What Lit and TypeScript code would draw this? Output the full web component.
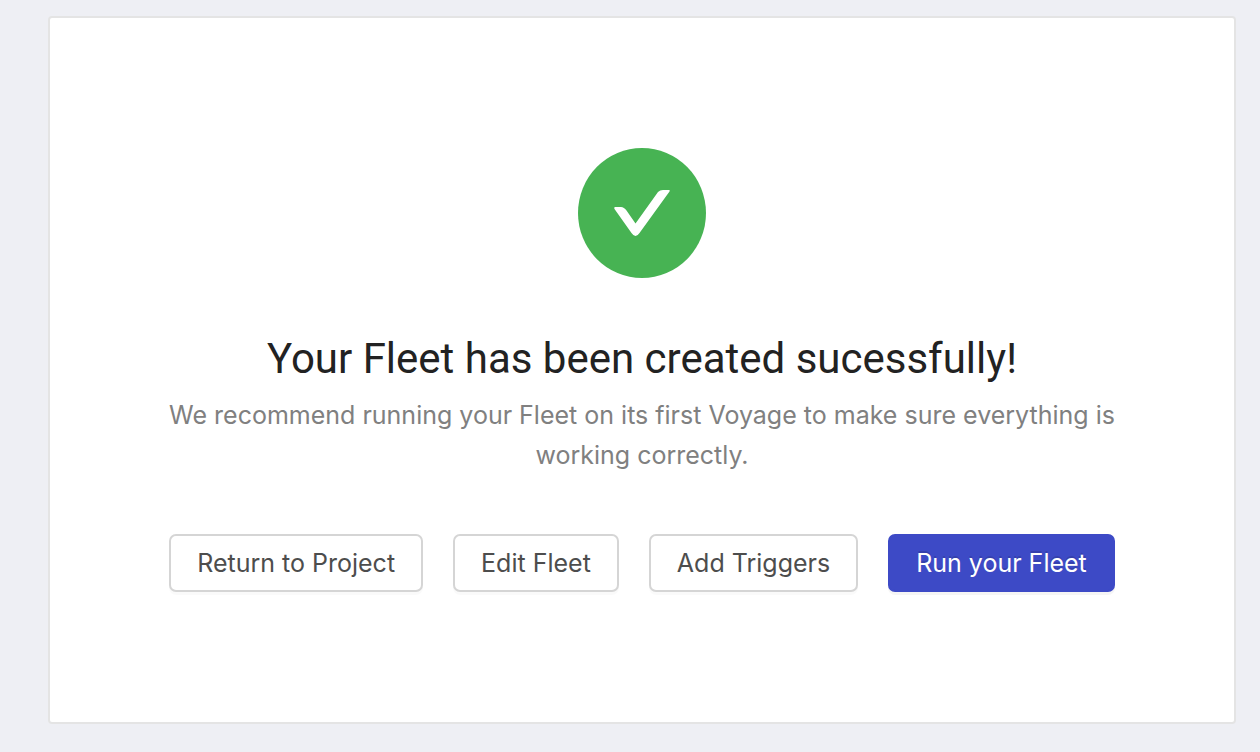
import { LitElement, html, css } from "lit";
import { customElement } from "lit/decorators.js";

@customElement("app-root")
export class AppRoot extends LitElement {
  static styles = css`
    :host {
      display: flex;
      box-sizing: border-box;
      min-height: 100vh;
      padding: 16px 24px 28px 48px;
      background: #eeeff4;
      font-family: Inter, "Liberation Sans", sans-serif;
    }
    .card {
      flex: 1;
      box-sizing: border-box;
      padding: 130px 112px 128px;
      border: 2px solid #e4e4e4;
      border-radius: 4px;
      background: #fff;
      display: flex;
      flex-direction: column;
      align-items: center;
      text-align: center;
    }
    .icon {
      width: 128px;
      height: 130px;
      display: block;
    }
    h1 {
      margin: 49px 0 0;
      font-family: Roboto, "Liberation Sans", sans-serif;
      font-size: 42px;
      line-height: 64px;
      font-weight: 400;
      color: #222;
    }
    p {
      margin: 4px 0 0;
      font-size: 25px;
      line-height: 40px;
      color: #808080;
    }
    .actions {
      display: flex;
      flex-wrap: wrap;
      justify-content: center;
      gap: 30px;
      margin-top: 59px;
    }
    button {
      box-sizing: border-box;
      height: 58px;
      padding: 0 26px;
      border: 2px solid #d5d5d5;
      border-radius: 7px;
      background: #fff;
      box-shadow: 0 3px 0 rgba(0, 0, 0, 0.02);
      font: 400 25px/40px Inter, "Liberation Sans", sans-serif;
      color: #4d4d4d;
      white-space: nowrap;
      cursor: pointer;
    }
    .primary {
      border-color: #3d4ac6;
      background: #3d4ac6;
      box-shadow: 0 3px 0 rgba(0, 0, 0, 0.04);
      color: #fff;
      text-shadow: 0 -2px 0 rgba(0, 0, 0, 0.12);
    }
  `;

  render() {
    return html`
      <main class="card">
        <svg class="icon" viewBox="0 0 128 130" aria-hidden="true">
          <ellipse cx="64" cy="65" rx="64" ry="65" fill="#47b353" />
          <path fill="#fff" d="M91 42H85Q82 42 80 44L57.500 75.500L48.500 62.500Q46 59 43 59H37Q35.500 59.500 36.500 61L53.500 85Q57.500 91 61.500 85L91.500 43.500Q92.500 42 91 42Z" />
        </svg>
        <h1>Your Fleet has been created sucessfully!</h1>
        <p>We recommend running your Fleet on its first Voyage to make sure everything is working correctly.</p>
        <div class="actions">
          <button type="button">Return to Project</button>
          <button type="button">Edit Fleet</button>
          <button type="button">Add Triggers</button>
          <button type="button" class="primary">Run your Fleet</button>
        </div>
      </main>
    `;
  }
}
